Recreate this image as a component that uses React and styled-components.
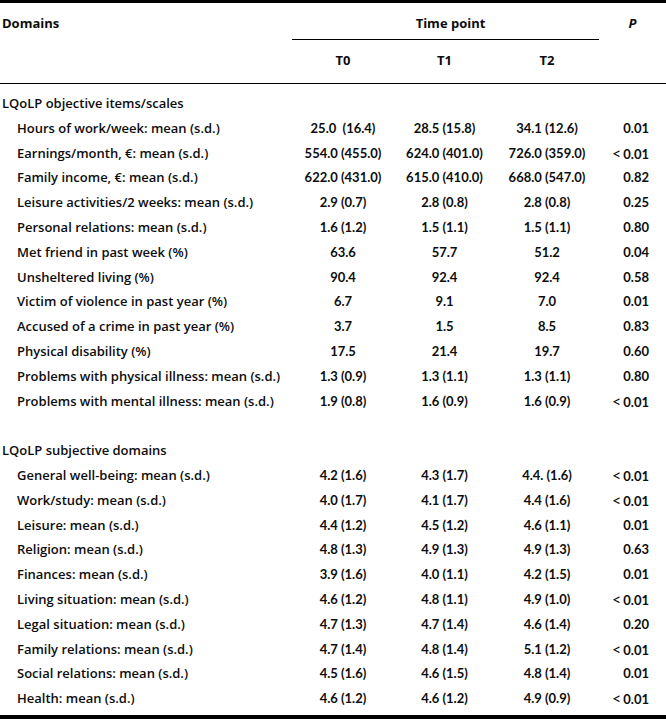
import React from "react";
import styled, { createGlobalStyle } from "styled-components";

const GlobalStyle = createGlobalStyle`
  html, body {
    margin: 0;
    padding: 0;
    background: #fff;
  }
  body {
    font-family: "Open Sans", "Lato", "Liberation Sans", sans-serif;
    color: #0d0d0d;
  }
`;

const COLUMNS = "292px 102px 101px 104px 1fr";

const objective = [
  ["Hours of work/week: mean (s.d.)", "25.0  (16.4)", "28.5 (15.8)", "34.1 (12.6)", "0.01"],
  ["Earnings/month, €: mean (s.d.)", "554.0 (455.0)", "624.0 (401.0)", "726.0 (359.0)", "<0.01"],
  ["Family income, €: mean (s.d.)", "622.0 (431.0)", "615.0 (410.0)", "668.0 (547.0)", "0.82"],
  ["Leisure activities/2 weeks: mean (s.d.)", "2.9 (0.7)", "2.8 (0.8)", "2.8 (0.8)", "0.25"],
  ["Personal relations: mean (s.d.)", "1.6 (1.2)", "1.5 (1.1)", "1.5 (1.1)", "0.80"],
  ["Met friend in past week (%)", "63.6", "57.7", "51.2", "0.04"],
  ["Unsheltered living (%)", "90.4", "92.4", "92.4", "0.58"],
  ["Victim of violence in past year (%)", "6.7", "9.1", "7.0", "0.01"],
  ["Accused of a crime in past year (%)", "3.7", "1.5", "8.5", "0.83"],
  ["Physical disability (%)", "17.5", "21.4", "19.7", "0.60"],
  ["Problems with physical illness: mean (s.d.)", "1.3 (0.9)", "1.3 (1.1)", "1.3 (1.1)", "0.80"],
  ["Problems with mental illness: mean (s.d.)", "1.9 (0.8)", "1.6 (0.9)", "1.6 (0.9)", "<0.01"],
];

const subjective = [
  ["General well-being: mean (s.d.)", "4.2 (1.6)", "4.3 (1.7)", "4.4. (1.6)", "<0.01"],
  ["Work/study: mean (s.d.)", "4.0 (1.7)", "4.1 (1.7)", "4.4 (1.6)", "<0.01"],
  ["Leisure: mean (s.d.)", "4.4 (1.2)", "4.5 (1.2)", "4.6 (1.1)", "0.01"],
  ["Religion: mean (s.d.)", "4.8 (1.3)", "4.9 (1.3)", "4.9 (1.3)", "0.63"],
  ["Finances: mean (s.d.)", "3.9 (1.6)", "4.0 (1.1)", "4.2 (1.5)", "0.01"],
  ["Living situation: mean (s.d.)", "4.6 (1.2)", "4.8 (1.1)", "4.9 (1.0)", "<0.01"],
  ["Legal situation: mean (s.d.)", "4.7 (1.3)", "4.7 (1.4)", "4.6 (1.4)", "0.20"],
  ["Family relations: mean (s.d.)", "4.7 (1.4)", "4.8 (1.4)", "5.1 (1.2)", "<0.01"],
  ["Social relations: mean (s.d.)", "4.5 (1.6)", "4.6 (1.5)", "4.8 (1.4)", "0.01"],
  ["Health: mean (s.d.)", "4.6 (1.2)", "4.6 (1.2)", "4.9 (0.9)", "<0.01"],
];

export default function App() {
  return (
    <>
      <GlobalStyle />
      <Table>
        <HeadTop>
          <HeadCell>Domains</HeadCell>
          <TimePoint>Time point</TimePoint>
          <HeadCell center>
            <em>P</em>
          </HeadCell>
        </HeadTop>
        <HeadSub>
          <span />
          <HeadCell center>T0</HeadCell>
          <HeadCell center>T1</HeadCell>
          <HeadCell center>T2</HeadCell>
          <span />
        </HeadSub>
        <Body>
          <Section>LQoLP objective items/scales</Section>
          {objective.map((r) => (
            <DataRow key={r[0]} row={r} />
          ))}
          <Blank />
          <Section>LQoLP subjective domains</Section>
          {subjective.map((r) => (
            <DataRow key={r[0]} row={r} />
          ))}
        </Body>
      </Table>
    </>
  );
}

function DataRow({ row }) {
  const [label, t0, t1, t2, p] = row;
  const less = p.startsWith("<");
  return (
    <Row>
      <Label>{label}</Label>
      <Value>{t0}</Value>
      <Value>{t1}</Value>
      <Value>{t2}</Value>
      <PValue>
        {less && <Lt>&lt;</Lt>}
        {less ? p.slice(1) : p}
      </PValue>
    </Row>
  );
}

const Table = styled.div`
  width: 666px;
  border-top: 3px solid #000;
  border-bottom: 4px solid #000;
  font-size: 13px;
  font-weight: 600;
`;

const HeadTop = styled.div`
  display: grid;
  grid-template-columns: 292px 307px 1fr;
  height: 37px;
  align-items: start;
`;

const HeadCell = styled.div`
  padding: 12px 0 0 ${(p) => (p.center ? 0 : 2)}px;
  line-height: 16px;
  font-weight: 700;
  text-align: ${(p) => (p.center ? "center" : "left")};
  em {
    font-style: italic;
  }
`;

const TimePoint = styled(HeadCell)`
  text-align: center;
  height: 24px;
  padding-left: 10px;
  border-bottom: 1px solid #000;
`;

const HeadSub = styled.div`
  display: grid;
  grid-template-columns: ${COLUMNS};
  box-sizing: border-box;
  height: 44px;
  border-bottom: 1px solid #000;
  ${HeadCell} {
    padding-top: 12px;
  }
`;

const Body = styled.div`
  padding: 7px 0 3.6px;
`;

const Row = styled.div`
  display: grid;
  grid-template-columns: ${COLUMNS};
  height: 24.8px;
  line-height: 24.8px;
  white-space: pre;
`;

const Section = styled.div`
  height: 24.8px;
  line-height: 24.8px;
  padding-left: 2px;
`;

const Blank = styled.div`
  height: 24.8px;
`;

const Label = styled.div`
  padding-left: 17px;
`;

const Value = styled.div`
  text-align: center;
  font-family: "Lato", "Open Sans", sans-serif;
  font-weight: 700;
  font-size: 13px;
`;

const PValue = styled(Value)`
  text-align: right;
  padding-right: 17px;
`;

const Lt = styled.span`
  font-size: 16px;
  font-weight: 400;
  margin-right: 2px;
`;
